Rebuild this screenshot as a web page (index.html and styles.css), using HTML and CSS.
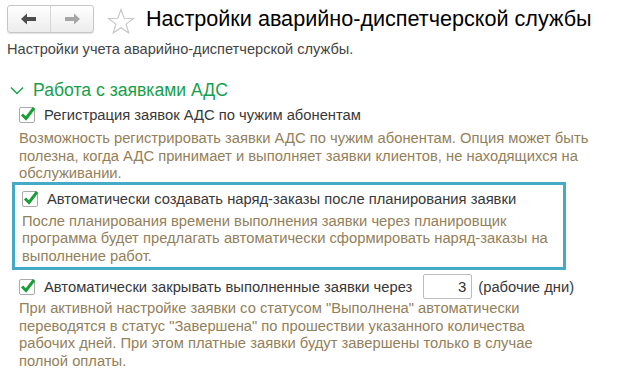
FILE: index.html
```html
<!DOCTYPE html>
<html lang="ru">
<head>
    <meta charset="UTF-8">
    <title>Настройки аварийно-диспетчерской службы</title>
    <link rel="stylesheet" href="styles.css">
</head>
<body>
    <div class="header">
        <div class="nav">
            <span class="nav-btn">
                <svg width="16" height="12" viewBox="0 0 16 12"><path d="M0 6 L6 0.5 L6 4 L15 4 L15 8 L6 8 L6 11.5 Z" fill="#4d4d4d"/></svg>
            </span>
            <span class="nav-btn">
                <svg width="16" height="12" viewBox="0 0 16 12"><path d="M16 6 L10 0.5 L10 4 L1 4 L1 8 L10 8 L10 11.5 Z" fill="#a6a6a6"/></svg>
            </span>
        </div>
        <svg class="star" width="28" height="27" viewBox="0 0 28 27"><path d="M14 1.5 L17.2 10.2 L26.5 10.4 L19.1 16.1 L21.8 25 L14 19.7 L6.2 25 L8.9 16.1 L1.5 10.4 L10.8 10.2 Z" fill="none" stroke="#c4c4c4" stroke-width="1.1"/></svg>
        <h1>Настройки аварийно-диспетчерской службы</h1>
    </div>
    <p class="subtitle">Настройки учета аварийно-диспетчерской службы.</p>

    <div class="group">
        <div class="group-title">
            <svg width="14" height="9" viewBox="0 0 14 9"><path d="M1 1.5 L7 7.5 L13 1.5" fill="none" stroke="#17a04a" stroke-width="1.4"/></svg>
            <span>Работа с заявками АДС</span>
        </div>

        <div class="option">
            <label class="check"><span class="box"><svg width="18" height="16" viewBox="0 0 18 16"><path d="M3 8.5 L7 12.5 L15 2" fill="none" stroke="#18a036" stroke-width="3"/></svg></span>Регистрация заявок АДС по чужим абонентам</label>
            <p class="hint">Возможность регистрировать заявки АДС по чужим абонентам. Опция может быть<br>полезна, когда АДС принимает и выполняет заявки клиентов, не находящихся на<br>обслуживании.</p>
        </div>

        <div class="option selected">
            <label class="check"><span class="box"><svg width="18" height="16" viewBox="0 0 18 16"><path d="M3 8.5 L7 12.5 L15 2" fill="none" stroke="#18a036" stroke-width="3"/></svg></span>Автоматически создавать наряд-заказы после планирования заявки</label>
            <p class="hint">После планирования времени выполнения заявки через планировщик<br>программа будет предлагать автоматически сформировать наряд-заказы на<br>выполнение работ.</p>
        </div>

        <div class="option last">
            <div class="check-row">
                <label class="check"><span class="box"><svg width="18" height="16" viewBox="0 0 18 16"><path d="M3 8.5 L7 12.5 L15 2" fill="none" stroke="#18a036" stroke-width="3"/></svg></span>Автоматически закрывать выполненные заявки через</label>
                <span class="num">3</span>
                <span class="unit">(рабочие дни)</span>
            </div>
            <p class="hint">При активной настройке заявки со статусом "Выполнена" автоматически<br>переводятся в статус "Завершена" по прошествии указанного количества<br>рабочих дней. При этом платные заявки будут завершены только в случае<br>полной оплаты.</p>
        </div>
    </div>
</body>
</html>
```

FILE: styles.css
```css
body {
    margin: 0;
    padding: 5px 7px;
    background: white;
    font-family: "Liberation Sans", Arial, sans-serif;
    color: #333;
    overflow: hidden;
}
.header {
    display: flex;
    align-items: center;
    height: 28px;
}
.nav {
    display: flex;
    height: 26px;
    border: 1px solid #c6c6c6;
    border-radius: 3px;
    background: linear-gradient(#ffffff, #ececec);
    box-shadow: 0 1px 1px rgba(0, 0, 0, 0.12);
}
.nav-btn {
    width: 42px;
    display: flex;
    justify-content: center;
    align-items: center;
}
.nav-btn + .nav-btn {
    border-left: 1px solid #d6d6d6;
}
.star {
    margin-left: 13px;
    margin-top: 4px;
}
h1 {
    margin: 0 0 0 11px;
    font-size: 21.6px;
    font-weight: normal;
    color: #000;
}
.subtitle {
    margin: 8px 0 0;
    font-size: 14.6px;
    line-height: 17px;
    color: #444;
}
.group {
    margin-top: 22px;
}
.group-title {
    display: flex;
    align-items: center;
    height: 20px;
    color: #17a04a;
    font-size: 17.6px;
    padding-left: 3px;
}
.group-title svg {
    margin-right: 9px;
}
.option {
    padding-left: 12px;
    margin-top: 6px;
}
.option.selected {
    margin: -1px 44px 0 5px;
    padding: 5px 0 2px 7px;
    border: 3px solid #46a9c6;
}
.option.last {
    margin-top: 4px;
}
.check {
    display: flex;
    align-items: center;
    height: 18px;
    font-size: 14.75px;
    color: #383838;
}
.box {
    position: relative;
    width: 14px;
    height: 14px;
    border: 1px solid #a9a9a9;
    border-radius: 2px;
    margin-right: 9px;
    background: white;
}
.box svg {
    position: absolute;
    left: -1px;
    top: -2px;
}
.hint {
    margin: 6px 0 0;
    font-size: 14.75px;
    line-height: 17.5px;
    white-space: nowrap;
    color: #94805a;
}
.selected .hint {
    margin-top: 5px;
}
.last .hint {
    margin-top: 1px;
    line-height: 17.7px;
}
.check-row {
    display: flex;
    align-items: center;
}
.num {
    width: 42px;
    height: 23px;
    margin-left: 11px;
    padding-right: 5px;
    border: 1px solid #bcbcbc;
    border-radius: 2px;
    text-align: right;
    line-height: 23px;
    font-size: 15px;
}
.unit {
    margin-left: 6px;
    font-size: 14.75px;
    color: #383838;
}
```
